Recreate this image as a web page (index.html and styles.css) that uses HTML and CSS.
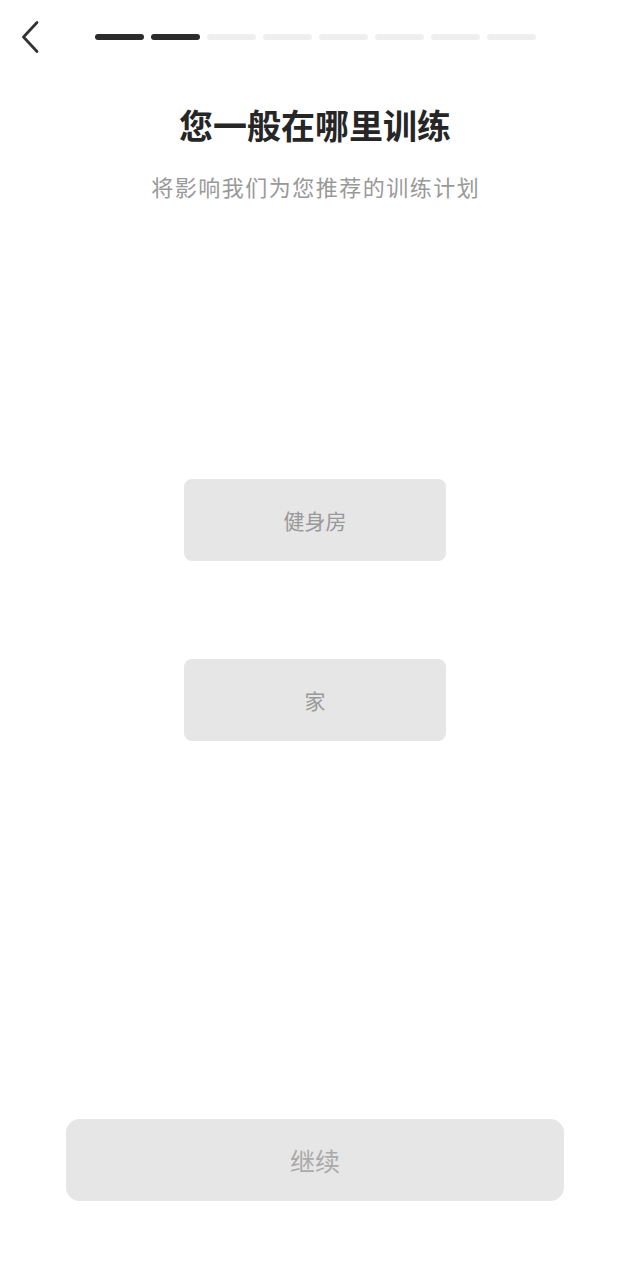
FILE: index.html
```html
<!DOCTYPE html>
<html lang="zh">
<head>
<meta charset="utf-8">
<link rel="stylesheet" href="styles.css">
</head>
<body>
<div class="page">
  <header class="topbar">
    <button class="back" aria-label="返回">
      <svg width="20" height="34" viewBox="0 0 20 34"><path d="M17 2.5 L3.5 17 L17 31.5" fill="none" stroke="#333" stroke-width="2.8" stroke-linecap="round" stroke-linejoin="round"/></svg>
    </button>
    <div class="progress">
      <span class="seg on"></span><span class="seg on"></span><span class="seg"></span><span class="seg"></span><span class="seg"></span><span class="seg"></span><span class="seg"></span><span class="seg"></span>
    </div>
  </header>
  <h1 class="title">您一般在哪里训练</h1>
  <p class="subtitle">将影响我们为您推荐的训练计划</p>
  <div class="options">
    <div class="option">健身房</div>
    <div class="option">家</div>
  </div>
  <div class="footer">
    <div class="continue">继续</div>
  </div>
</div>
</body>
</html>
```
FILE: styles.css
```css
html, body {
  margin: 0;
  padding: 0;
  background: #fff;
}
body {
  font-family: "Noto Sans CJK SC", "Noto Sans", sans-serif;
}
.page {
  height: 1280px;
  display: flex;
  flex-direction: column;
}
.topbar {
  height: 74px;
  display: flex;
  align-items: center;
  padding-left: 20px;
}
.back {
  border: 0;
  background: none;
  padding: 0;
  width: 20px;
  height: 34px;
  display: flex;
}
.progress {
  margin-left: 55px;
  display: flex;
  gap: 7px;
}
.seg {
  width: 49px;
  height: 6px;
  border-radius: 3px;
  background: #efefef;
}
.seg.on {
  background: #2b2b2b;
}
.title {
  margin: 29px 0 0;
  text-align: center;
  font-size: 34px;
  line-height: 44px;
  font-weight: 700;
  color: #262626;
}
.subtitle {
  margin: 24px 0 0;
  text-align: center;
  font-size: 22px;
  line-height: 30px;
  color: #999;
  letter-spacing: 1.5px;
  text-indent: 1.5px;
}
.options {
  margin-top: 278px;
  display: flex;
  flex-direction: column;
  align-items: center;
  gap: 98px;
}
.option {
  width: 262px;
  height: 82px;
  border-radius: 8px;
  background: #e6e6e6;
  color: #999;
  font-size: 21px;
  display: flex;
  align-items: center;
  justify-content: center;
}
.footer {
  margin-top: auto;
  padding-bottom: 79px;
  display: flex;
  justify-content: center;
}
.continue {
  width: 498px;
  height: 82px;
  border-radius: 14px;
  background: #e6e6e6;
  color: #aaa;
  font-size: 25px;
  display: flex;
  align-items: center;
  justify-content: center;
}
```
